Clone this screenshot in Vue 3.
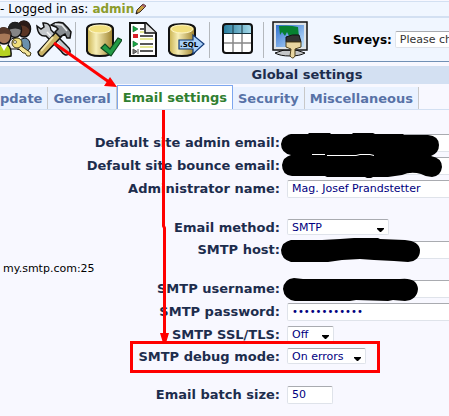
<script setup>
import { ref } from 'vue'

const tabs = ref([
    {name: 'pdate', value: 'update'},
    {name: 'General', value: 'general'},
    {name: 'Email settings', value: 'email'},
    {name: 'Security', value: 'security'},
    {name: 'Miscellaneous', value: 'misc'}
])
const activeTab = ref('email')

const survey = ref('')

// A row without a type is only a spacer, with an optional hint
const rows = ref([
    {id: 'adminemail', label: 'Default site admin email:', type: 'text', value: ''},
    {id: 'bounceemail', label: 'Default site bounce email:', type: 'text', value: ''},
    {id: 'adminname', label: 'Administrator name:', type: 'text', value: 'Mag. Josef Prandstetter'},
    {id: 'space1'},
    {id: 'emailmethod', label: 'Email method:', type: 'select', size: 'wide', value: 'SMTP', options: ['PHP', 'SMTP', 'Sendmail', 'qmail']},
    {id: 'smtphost', label: 'SMTP host:', type: 'text', value: ''},
    {id: 'space2', hint: 'my.smtp.com:25'},
    {id: 'smtpuser', label: 'SMTP username:', type: 'text', value: ''},
    {id: 'smtppassword', label: 'SMTP password:', type: 'password', value: 'somepassword'},
    {id: 'smtpssl', label: 'SMTP SSL/TLS:', type: 'select', size: 'small', value: 'Off', options: ['Off', 'SSL', 'TLS']},
    {id: 'smtpdebug', label: 'SMTP debug mode:', type: 'select', size: 'medium', value: 'On errors', options: ['Off', 'On errors', 'Always']},
    {id: 'space3'},
    {id: 'batchsize', label: 'Email batch size:', type: 'text', size: 'short', value: '50'}
])
</script>

<template>
    <div class="page">
        <div class="login-bar">
            <span>- Logged in as:</span>
            <a href="#" class="login-user">admin
                <svg width="12" height="12" viewBox="0 0 12 12">
                    <path d="M1 11 L2 7 L8 1 L11 3 L5 9 Z" fill="#c9a040" stroke="#3a2a20" />
                    <path d="M8 1 L11 3 L9.500 4.500 L6.500 2.500 Z" fill="#a06070" />
                    <path d="M1 11 L1.500 9 L3 10 Z" fill="#111" />
                </svg>
            </a>
        </div>

        <div class="toolbar">
            <svg width="33" height="42" viewBox="0 18 33 42">
                <path d="M17 48 Q17 38 25 37 Q31 38 30 47 L27 51 Z" fill="#6a90ac" stroke="#111" />
                <ellipse cx="24" cy="28" rx="6.500" ry="8" fill="#5a3524" stroke="#111" stroke-width="1.500" />
                <path d="M18 25 Q19 19 25 20 Q31 21 30 30 Q26 23 18 25" fill="#2b1b16" />
                <path d="M8 48 Q8 37 15 37 Q22 38 23 48 Z" fill="#e8e8e8" stroke="#111" />
                <ellipse cx="15" cy="29" rx="6.500" ry="7.500" fill="#858585" stroke="#111" stroke-width="1.500" />
                <path d="M8 29 Q8 21 15 21 Q22 21 21 29 Q16 26 8 29" fill="#222" />
                <path d="M-5 53 Q-3 42 5 43 Q12 44 11 55 Q3 57 -5 55 Z" fill="#b7d322" stroke="#111" stroke-width="1.500" />
                <path d="M0 43 L4 50 L8 43 Z" fill="#fff" />
                <ellipse cx="4" cy="35" rx="7" ry="8" fill="#a87858" stroke="#111" stroke-width="1.500" />
                <path d="M-4 34 Q-3 26 4 26 Q11 27 11 34 Q5 31 -4 34" fill="#56382b" />
                <path d="M20 44 L31 52 L30 55 L27 55 L25 52 L23 52 L19 48" fill="#f5e69a" stroke="#413812" />
                <circle cx="17" cy="42" r="5" fill="#f0df7c" stroke="#413812" />
                <circle cx="15" cy="41" r="1.500" fill="#fff" stroke="#413812" stroke-width=".7" />
            </svg>
            <svg width="36" height="42" viewBox="36 18 36 42">
                <path d="M37 25 L41 28 L44 26 L43 22 Q50 21 51 29 L67 45 Q72 49 69 53 Q65 56 61 50 L46 35 Q38 36 37 25 Z" fill="#c3c7cb" stroke="#111" stroke-width="1.500" />
                <path d="M47 31 L65 50" stroke="#f5f5f5" stroke-width="1.500" />
                <path d="M56 31 L61 36 L43 55 Q39 56 38 51 Z" fill="#c9b264" stroke="#111" stroke-width="1.500" />
                <path d="M53 36 L41 50" stroke="#f3e6a8" stroke-width="2" />
                <path d="M51 24 Q56 20 63 22 L68 27 L71 31 L70 37 L67 37 L65 33 L60 36 L55 31 L58 28 L56 26 Z" fill="#888d92" stroke="#111" stroke-width="1.500" />
                <path d="M55 23 L62 24 L67 30" fill="none" stroke="#e8eaec" stroke-width="1.500" />
            </svg>
            <span class="separator"></span>
            <svg width="38" height="42" viewBox="84 18 38 42">
                <defs>
                    <linearGradient id="barrel" x1="0" x2="1">
                        <stop offset="0" stop-color="#c8b04c" />
                        <stop offset=".35" stop-color="#f7efb8" />
                        <stop offset="1" stop-color="#9c7f28" />
                    </linearGradient>
                </defs>
                <path d="M87 28 Q87 23 100 23 Q113 23 113 28 V50 Q112 55 100 55 Q88 55 87 50 Z" fill="url(#barrel)" stroke="#111" stroke-width="2" />
                <ellipse cx="100" cy="28" rx="11" ry="4" fill="#f1df7e" stroke="#fff7c9" />
                <path d="M101 47 L105 43 L110 48 L118 37 L122 39 L111 55 Z" fill="#239b45" stroke="#0c4a20" stroke-width="1.200" />
            </svg>
            <svg width="36" height="42" viewBox="125 18 36 42">
                <path d="M130 22 H146 L156 32 V55 H130 Z" fill="#fff" stroke="#111" stroke-width="2" />
                <path d="M145 22 V32 H156" fill="#e4e4e4" stroke="#111" stroke-width="1.500" />
                <path d="M133 25 L138 28 L133 31 Z M133 40 L138 43 L133 46 Z" fill="#18a844" stroke="#0b632a" stroke-width=".6" />
                <rect x="133" y="33" width="5" height="4" fill="#d91e2a" />
                <path d="M133 48 L137 50.500 L133 53 Z M138 48 V53" fill="#777" stroke="#555" />
                <path d="M140 28 H144 M140 35 H153 M140 43 H153 M140 50 H153" stroke="#222" stroke-width="1.500" />
                <path d="M140 31 H144 M140 38 H153 M140 46 H153" stroke="#e7e995" stroke-width="2" />
            </svg>
            <svg width="42" height="42" viewBox="164 18 42 42">
                <path d="M169 28 Q169 23 182 23 Q195 23 195 28 V50 Q194 55 182 55 Q170 55 169 50 Z" fill="url(#barrel)" stroke="#111" stroke-width="2" />
                <ellipse cx="182" cy="28" rx="11" ry="4" fill="#f1df7e" stroke="#fff7c9" />
                <path d="M179 39 H193 V34 L204 43 L193 53 V48 H179 Z" fill="#a9d0f8" stroke="#123a78" stroke-width="1.200" />
                <text x="180" y="46" class="sql">.SQL</text>
            </svg>
            <span class="separator"></span>
            <svg width="42" height="42" viewBox="218 18 42 42">
                <defs>
                    <linearGradient id="tablehead" x1="0" x2="1">
                        <stop offset="0" stop-color="#247a9c" />
                        <stop offset="1" stop-color="#a8dcec" />
                    </linearGradient>
                </defs>
                <rect x="223" y="23" width="29" height="29" rx="3" fill="#fff" />
                <path d="M223 32 V26 Q223 23 226 23 H249 Q252 23 252 26 V32 Z" fill="url(#tablehead)" />
                <path d="M233 33 V52 M242 33 V52 M223 42 H252" stroke="#888" stroke-width="1.500" />
                <path d="M233 23 V32 M242 23 V32 M223 32.500 H252" stroke="#173440" />
                <rect x="223" y="23" width="29" height="29" rx="3" fill="none" stroke="#111" stroke-width="2" />
            </svg>
            <span class="separator"></span>
            <svg width="37" height="42" viewBox="272 18 37 42">
                <defs>
                    <linearGradient id="screen" x1="0" x2="1" y2="1">
                        <stop offset="0" stop-color="#2e6fd0" />
                        <stop offset="1" stop-color="#c5e4fb" />
                    </linearGradient>
                </defs>
                <path d="M284 49 H296 L305 52 Q300 55 290 55 Q280 55 275 52 Z" fill="#c4c6c8" stroke="#111" />
                <rect x="273" y="21" width="34" height="28" fill="#dfe3e5" stroke="#111" stroke-width="1.500" />
                <rect x="276" y="24" width="28" height="22" fill="url(#screen)" />
                <path d="M279 25 Q290 24 298 26 L299 36 H294 L292 34 L289 35 L287 31 L285 35 L282 31 L280 34 Z" fill="#078030" />
                <path d="M286 36 Q292 33 299 34 L301 41 H286 Z" fill="#333" stroke="#111" />
                <path d="M286 41 H301 V46 L295 48 V55 Q293 59 290 55 L291 48 L286 46 Z" fill="#e8d5a0" stroke="#4e401c" />
            </svg>
            <label class="survey-label" for="survey">Surveys:</label>
            <select id="survey" v-model="survey" class="survey-select">
                <option value="">Please choose...</option>
            </select>
        </div>

        <h1 class="title">Global settings</h1>

        <nav class="tabs">
            <button v-for="tab in tabs" :key="tab.value" type="button" class="tab" :class="{'tab-active': tab.value === activeTab}" @click="activeTab = tab.value">{{ tab.name }}</button>
        </nav>

        <form class="settings" @submit.prevent>
            <template v-for="row in rows" :key="row.id">
                <p v-if="!row.type" class="spacer">{{ row.hint }}</p>
                <div v-else class="row" :class="{'row-select': row.type === 'select'}">
                    <label :for="row.id">{{ row.label }}</label>
                    <div v-if="row.type === 'select'" class="select-box" :class="row.size">
                        <select :id="row.id" v-model="row.value">
                            <option v-for="option in row.options" :key="option">{{ option }}</option>
                        </select>
                        <svg class="arrow" width="7" height="4" viewBox="0 0 7 4"><path d="M0 0 H7 V1 L4 4 H3 L0 1 Z" /></svg>
                    </div>
                    <input v-else :id="row.id" v-model="row.value" :type="row.type" :class="row.size" autocomplete="off">
                </div>
            </template>
        </form>

        <!-- Markers drawn over the page: hidden values, arrows and the highlighted option -->
        <svg class="markers" width="449" height="416" viewBox="0 0 449 416">
            <g fill="#000">
                <path d="M291 134 L308 134 L309 133 L330 133 L331 134 L352 134 L353 133 L373 133 L375 134 L403 134 L404 135 H428 Q439 136 439 145 Q439 153 431 156 Q442 158 442 167 Q441 176 432 177 Q426 177 421 174 Q411 171 402 175 L388 177 H373 L371 178 H367 L365 177 H327 L325 176 H292 Q282 175 282 165 Q283 157 291 155 Q281 153 281 144 Q282 136 291 134 Z" />
                <path d="M291 240 H322 L340 239 L354 238 H378 L380 239 L405 240 Q419 241 420 250 Q420 261 408 262 L394 261 L374 260 L360 259 L342 260 L328 262 H291 Q281 259 281 250 Q282 242 291 240 Z" />
                <path d="M294 278 L303 279 H400 Q417 277 418 289 Q417 300 405 301 L393 300 L388 301 L356 300 L350 301 H295 Q284 299 283 289 Q284 279 294 278 Z" />
            </g>
            <path d="M312 154.500 H325 M327 155.500 H356 L360 154.500 H370 L374 155.500 H374" stroke="#fff" fill="none" />
            <g fill="none" stroke="#f00" stroke-width="3">
                <path d="M54 43 L109 82" />
                <path d="M163.500 110 V226 L164.500 228 V336" />
                <rect x="131.500" y="342.500" width="247" height="29" />
            </g>
            <path d="M117 87 L104 86 L110 77 Z M160 333 H169 L166 343 H163 Z" fill="#f00" />
        </svg>
    </div>
</template>

<style>
body {
    background: #f8f8ff;
}
</style>

<style scoped>
.page {
    position: relative;
    overflow: hidden;
    min-height: 416px;
    font-family: Verdana, "DejaVu Sans", sans-serif;
    font-size: 11px;
    color: #000;
}

.login-bar {
    display: flex;
    align-items: center;
    gap: 4px;
    height: 14px;
    margin-top: 1px;
    border-top: 1px solid #d3e0f2;
    border-bottom: 2px solid #d3e0f2;
    background: #f0f6ff;
    font-size: 12px;
}

.login-user {
    display: flex;
    align-items: center;
    gap: 1px;
    color: #8c9c2c;
    font-weight: bold;
    text-decoration: none;
}

.toolbar {
    display: flex;
    align-items: center;
    gap: 3px;
    height: 43px;
    border-bottom: 1px solid #7190b5;
    background: #f0f6ff;
}

.toolbar svg {
    flex: none;
}

.separator {
    flex: none;
    width: 1px;
    height: 36px;
    margin-right: 5px;
    background: #b4b8bd;
}

.sql {
    font-size: 7px;
    font-weight: bold;
}

.survey-label {
    flex: none;
    margin-left: 21px;
    font-size: 12px;
    font-weight: bold;
}

.title {
    margin: 4px 0 0;
    padding-left: 165px;
    background: #d3e0f2;
    color: #1d2d4d;
    font-size: 13px;
    line-height: 18px;
    text-align: center;
}

.tabs {
    display: flex;
    align-items: flex-end;
    height: 24px;
    margin-top: 1px;
    border-bottom: 1px solid #d3e0f2;
}

.tab {
    flex: none;
    height: 22px;
    padding: 0 5px;
    border: 0;
    border-right: 1px solid #c8c8c8;
    background: #eaf2ff;
    color: #5872a7;
    font-family: inherit;
    font-size: 13px;
    font-weight: bold;
}

.tab:first-child {
    padding-left: 0;
}

.tab-active {
    height: 24px;
    border: 1px solid #7da7ef;
    border-bottom: 0;
    background: #fff;
    color: #308030;
}

.settings {
    padding-top: 21px;
}

.row {
    display: flex;
    align-items: center;
    gap: 7px;
    height: 23px;
}

.row-select {
    height: 22px;
}

.row label {
    flex: none;
    width: 280px;
    color: #1d2d4d;
    font-size: 13px;
    font-weight: bold;
    text-align: right;
}

.spacer {
    height: 16px;
    margin: 0;
    padding-left: 3px;
    line-height: 16px;
}

input,
select {
    box-sizing: border-box;
    border: 1px solid #dfe3ea;
    border-top-color: #a9abb0;
    border-radius: 2px;
    background: #fff;
    color: #000080;
    font-family: inherit;
    font-size: 11px;
}

input {
    flex: 1;
    min-width: 0;
    height: 18px;
    margin-right: -6px;
    padding: 0 4px;
}

input[type="password"] {
    font-size: 10px;
}

.short {
    flex: none;
    width: 46px;
}

select {
    width: 100%;
    height: 16px;
    padding: 0 4px;
    appearance: none;
}

.select-box {
    position: relative;
    display: flex;
}

.wide {
    width: 102px;
}

.medium {
    width: 79px;
}

.small {
    width: 47px;
}

.arrow {
    position: absolute;
    right: 5px;
    bottom: 3px;
    pointer-events: none;
}

.survey-select {
    flex: none;
    width: 130px;
    height: 17px;
    color: #333;
}

.markers {
    position: absolute;
    top: 0;
    left: 0;
    pointer-events: none;
}
</style>
